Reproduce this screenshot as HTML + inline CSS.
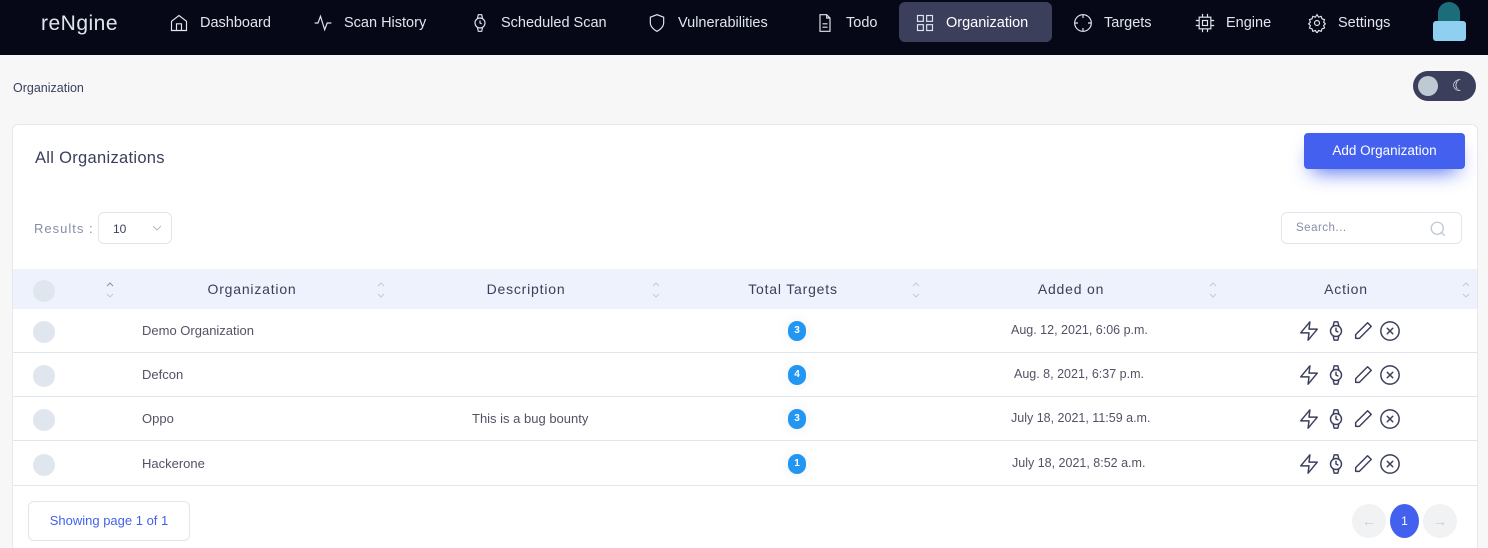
<!DOCTYPE html>
<html><head><meta charset="utf-8"><style>
*{box-sizing:border-box;margin:0;padding:0}
html,body{width:1488px;height:548px;overflow:hidden}
body{background:#f7f7f8;font-family:"Liberation Sans",sans-serif;position:relative;color:#3b3f5c}
.abs{position:absolute}
.nav{left:0;top:0;width:1488px;height:55px;background:#060818}
.ni{position:absolute;top:0;height:46px;display:flex;align-items:center;color:#e0e6ed;font-size:14.5px;gap:11px}
.ni svg{width:20px;height:20px;fill:none;stroke:#e0e6ed;stroke-width:1.4}
.card{left:12px;top:124px;width:1466px;height:430px;background:#fff;border:1px solid #e6e8ee;border-radius:6px}
.th{top:269px;left:13px;width:1464px;height:40px;background:#eef2fc}
.row{left:13px;width:1464px;border-bottom:1px solid #e0e6ed}
.chk{position:absolute;left:20px;width:22px;height:22px;border-radius:50%;background:#e0e6ed}
.t{position:absolute;font-size:13px;color:#515365;white-space:nowrap}
.h{position:absolute;font-size:14px;color:#3b3f5c;letter-spacing:.8px;transform:translateX(-50%);top:12px}
.sort{position:absolute;top:11px;width:10px;height:20px}
.badge{position:absolute;width:18px;height:20px;border-radius:9px;background:#2196f3;color:#fff;font-size:10px;text-align:center;line-height:20px;font-weight:bold;box-shadow:0 0 12px rgba(0,0,0,.08)}
.ic{position:absolute;display:flex;gap:5px;left:1285px}
.ic svg{width:22px;height:22px;fill:none;stroke:#3b3f5c;stroke-width:1.6;stroke-linecap:round;stroke-linejoin:round}
</style></head><body>
<div class="abs nav">
 <div class="abs" style="left:41px;top:12px;color:#e0e6ed;font-size:21px;letter-spacing:.5px">reNgine</div>
 <div class="ni" style="left:169px;top:0"><svg viewBox="0 0 24 24"><path d="M3 10l9-7 9 7v11H3z M9 21v-8h6v8"/></svg>Dashboard</div>
 <div class="ni" style="left:313px;top:0"><svg viewBox="0 0 24 24"><path d="M2 12h4l3-8 5 16 3-8h5"/></svg>Scan History</div>
 <div class="ni" style="left:470px;top:0"><svg viewBox="0 0 24 24"><circle cx="12" cy="12" r="6"/><path d="M12 9v3l2 1M9 6l1-4h4l1 4M9 18l1 4h4l1-4"/></svg>Scheduled Scan</div>
 <div class="ni" style="left:647px;top:0"><svg viewBox="0 0 24 24"><path d="M12 22s8-4 8-10V5l-8-3-8 3v7c0 6 8 10 8 10z"/></svg>Vulnerabilities</div>
 <div class="ni" style="left:815px;top:0"><svg viewBox="0 0 24 24"><path d="M14 2H6v20h12V6z M14 2v4h4 M9 13h6 M9 17h6"/></svg>Todo</div>
 <div class="abs" style="left:899px;top:2px;width:153px;height:40px;background:#3b3f5c;border-radius:6px"></div>
 <div class="ni" style="left:915px;top:0;color:#fff"><svg viewBox="0 0 24 24"><rect x="3" y="3" width="7" height="7"/><rect x="14" y="3" width="7" height="7"/><rect x="3" y="14" width="7" height="7"/><rect x="14" y="14" width="7" height="7"/></svg>Organization</div>
 <div class="ni" style="left:1073px;top:0"><svg viewBox="0 0 24 24"><circle cx="12" cy="12" r="10"/><path d="M12 2v4M12 18v4M2 12h4M18 12h4"/></svg>Targets</div>
 <div class="ni" style="left:1195px;top:0"><svg viewBox="0 0 24 24"><rect x="5" y="5" width="14" height="14"/><rect x="9" y="9" width="6" height="6"/><path d="M9 1v4M15 1v4M9 19v4M15 19v4M1 9h4M1 15h4M19 9h4M19 15h4"/></svg>Engine</div>
 <div class="ni" style="left:1307px;top:0"><svg viewBox="0 0 24 24"><circle cx="12" cy="12" r="3"/><path d="M12 2l2 3 3-1 1 3 3 1-1 3 2 2-2 2 1 3-3 1-1 3-3-1-2 3-2-3-3 1-1-3-3-1 1-3-2-2 2-2-1-3 3-1 1-3 3 1z"/></svg>Settings</div>
 <div class="abs" style="left:1438px;top:2px;width:22px;height:26px;border-radius:11px 11px 2px 2px;background:#1b6d7a"></div>
 <div class="abs" style="left:1433px;top:21px;width:33px;height:20px;border-radius:3px;background:#8fcff0"></div>
</div>
<div class="abs" style="left:13px;top:81px;font-size:12.5px;color:#3b3f5c">Organization</div>
<div class="abs" style="left:1413px;top:71px;width:63px;height:30px;border-radius:15px;background:#3b3f5c"></div>
<div class="abs" style="left:1418px;top:76px;width:20px;height:20px;border-radius:50%;background:#bfc9d4"></div>
<div class="abs" style="left:1452px;top:76px;color:#fff;font-size:16px">☾</div>
<div class="abs card"></div>
<div class="abs" style="left:35px;top:149px;font-size:16.5px;color:#3b3f5c;letter-spacing:.3px">All Organizations</div>
<div class="abs" style="left:1304px;top:133px;width:161px;height:36px;background:#4361ee;border-radius:4px;color:#fff;font-size:13.5px;text-align:center;line-height:36px;box-shadow:0 10px 20px -8px #4361ee">Add Organization</div>
<div class="abs" style="left:34px;top:221px;font-size:13px;color:#888ea8;letter-spacing:1px">Results :</div>
<div class="abs" style="left:98px;top:212px;width:74px;height:32px;border:1px solid #e0e6ed;border-radius:6px;font-size:12px;color:#3b3f5c;padding:9px 0 0 14px">10<svg style="position:absolute;right:9px;top:12px" width="10" height="6" viewBox="0 0 10 6" fill="none" stroke="#bbb"><path d="M1 1l4 4 4-4"/></svg></div>
<div class="abs" style="left:1281px;top:212px;width:181px;height:32px;border:1px solid #e0e6ed;border-radius:6px;font-size:11.5px;color:#888ea8;padding:9px 0 0 14px;letter-spacing:.5px">Search...
<svg style="position:absolute;right:14px;top:7px" width="18" height="18" viewBox="0 0 24 24" fill="none" stroke="#bfc9d4" stroke-width="1.8"><circle cx="11" cy="11" r="8"/><path d="M21 21l-4-4"/></svg></div>
<div class="abs th">
 <div class="chk" style="top:11px"></div>
 <svg class="sort" style="left:92px" viewBox="0 0 10 20" fill="none" stroke="#8a90a8" stroke-width="1"><path d="M2 6l3-3 3 3"/><path d="M2 14l3 3 3-3" stroke="#c5c9d6"/></svg>
 <div class="h" style="left:239px">Organization</div><svg class="sort" style="left:363px" viewBox="0 0 10 20" fill="none" stroke="#c5c9d6" stroke-width="1"><path d="M2 6l3-3 3 3M2 14l3 3 3-3"/></svg>
 <div class="h" style="left:513px">Description</div><svg class="sort" style="left:638px" viewBox="0 0 10 20" fill="none" stroke="#c5c9d6" stroke-width="1"><path d="M2 6l3-3 3 3M2 14l3 3 3-3"/></svg>
 <div class="h" style="left:780px">Total Targets</div><svg class="sort" style="left:898px" viewBox="0 0 10 20" fill="none" stroke="#c5c9d6" stroke-width="1"><path d="M2 6l3-3 3 3M2 14l3 3 3-3"/></svg>
 <div class="h" style="left:1058px">Added on</div><svg class="sort" style="left:1195px" viewBox="0 0 10 20" fill="none" stroke="#c5c9d6" stroke-width="1"><path d="M2 6l3-3 3 3M2 14l3 3 3-3"/></svg>
 <div class="h" style="left:1333px">Action</div><svg class="sort" style="left:1448px" viewBox="0 0 10 20" fill="none" stroke="#c5c9d6" stroke-width="1"><path d="M2 6l3-3 3 3M2 14l3 3 3-3"/></svg>
</div>
<div class="abs row" style="top:309px;height:44px"><div class="chk" style="top:12px"></div><div class="t" style="left:129px;top:14px">Demo Organization</div><div class="badge" style="left:775px;top:12px">3</div><div class="t" style="left:998px;top:14px;font-size:12.5px">Aug. 12, 2021, 6:06 p.m.</div>
<div class="ic" style="top:11px"><svg viewBox="0 0 24 24"><path d="M13 2L3 14h9l-1 8 10-12h-9z"/></svg><svg viewBox="0 0 24 24"><circle cx="12" cy="12" r="6"/><path d="M12 9v3l2 1M9 6l1-4h4l1 4M9 18l1 4h4l1-4"/></svg><svg viewBox="0 0 24 24"><path d="M17 3l4 4L8 20H4v-4z"/></svg><svg viewBox="0 0 24 24"><circle cx="12" cy="12" r="10"/><path d="M15 9l-6 6M9 9l6 6"/></svg></div></div>
<div class="abs row" style="top:353px;height:44px"><div class="chk" style="top:12px"></div><div class="t" style="left:129px;top:14px">Defcon</div><div class="badge" style="left:775px;top:12px">4</div><div class="t" style="left:1001px;top:14px;font-size:12.5px">Aug. 8, 2021, 6:37 p.m.</div>
<div class="ic" style="top:11px"><svg viewBox="0 0 24 24"><path d="M13 2L3 14h9l-1 8 10-12h-9z"/></svg><svg viewBox="0 0 24 24"><circle cx="12" cy="12" r="6"/><path d="M12 9v3l2 1M9 6l1-4h4l1 4M9 18l1 4h4l1-4"/></svg><svg viewBox="0 0 24 24"><path d="M17 3l4 4L8 20H4v-4z"/></svg><svg viewBox="0 0 24 24"><circle cx="12" cy="12" r="10"/><path d="M15 9l-6 6M9 9l6 6"/></svg></div></div>
<div class="abs row" style="top:397px;height:44px"><div class="chk" style="top:12px"></div><div class="t" style="left:129px;top:14px">Oppo</div><div class="t" style="left:459px;top:14px">This is a bug bounty</div><div class="badge" style="left:775px;top:12px">3</div><div class="t" style="left:998px;top:14px;font-size:12.5px">July 18, 2021, 11:59 a.m.</div>
<div class="ic" style="top:11px"><svg viewBox="0 0 24 24"><path d="M13 2L3 14h9l-1 8 10-12h-9z"/></svg><svg viewBox="0 0 24 24"><circle cx="12" cy="12" r="6"/><path d="M12 9v3l2 1M9 6l1-4h4l1 4M9 18l1 4h4l1-4"/></svg><svg viewBox="0 0 24 24"><path d="M17 3l4 4L8 20H4v-4z"/></svg><svg viewBox="0 0 24 24"><circle cx="12" cy="12" r="10"/><path d="M15 9l-6 6M9 9l6 6"/></svg></div></div>
<div class="abs row" style="top:441px;height:45px"><div class="chk" style="top:13px"></div><div class="t" style="left:129px;top:15px">Hackerone</div><div class="badge" style="left:775px;top:13px">1</div><div class="t" style="left:999px;top:15px;font-size:12.5px">July 18, 2021, 8:52 a.m.</div>
<div class="ic" style="top:12px"><svg viewBox="0 0 24 24"><path d="M13 2L3 14h9l-1 8 10-12h-9z"/></svg><svg viewBox="0 0 24 24"><circle cx="12" cy="12" r="6"/><path d="M12 9v3l2 1M9 6l1-4h4l1 4M9 18l1 4h4l1-4"/></svg><svg viewBox="0 0 24 24"><path d="M17 3l4 4L8 20H4v-4z"/></svg><svg viewBox="0 0 24 24"><circle cx="12" cy="12" r="10"/><path d="M15 9l-6 6M9 9l6 6"/></svg></div></div>
<div class="abs" style="left:28px;top:501px;width:162px;height:40px;border:1px solid #e0e6ed;border-radius:6px;color:#4361ee;font-size:13px;text-align:center;line-height:38px">Showing page 1 of 1</div>
<div class="abs" style="left:1352px;top:504px;width:34px;height:34px;border-radius:50%;background:#f1f2f3;color:#ccc;text-align:center;line-height:34px;font-size:14px">←</div>
<div class="abs" style="left:1390px;top:504px;width:29px;height:34px;border-radius:50%;background:#4361ee;color:#fff;text-align:center;line-height:34px;font-size:12px">1</div>
<div class="abs" style="left:1423px;top:504px;width:34px;height:34px;border-radius:50%;background:#f1f2f3;color:#ccc;text-align:center;line-height:34px;font-size:14px">→</div>
</body></html>
